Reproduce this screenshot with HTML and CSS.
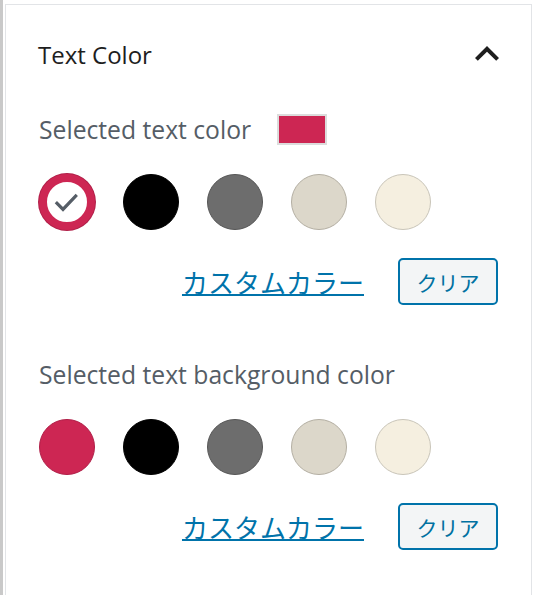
FILE: index.html
```html
<!DOCTYPE html>
<html lang="ja">
  <head>
    <meta charset="UTF-8" />
    <meta name="viewport" content="width=device-width, initial-scale=1.0" />
    <title>Text Color</title>
    <link rel="stylesheet" href="styles.css">
  </head>
  <body>
    <div class="edge"></div>
    <div class="panel">
      <div class="panel-header">
        <h2>Text Color</h2>
        <svg class="chevron" width="48" height="48" viewBox="0 0 24 24">
          <path d="M12 8l-6 6 1.41 1.41L12 10.83l4.59 4.58L18 14z" fill="#1e1e1e" />
        </svg>
      </div>

      <div class="setting">
        <div class="label-row">
          <span class="label">Selected text color</span>
          <span class="current"></span>
        </div>
        <div class="swatches">
          <button class="swatch red selected">
            <svg width="32" height="32" viewBox="0 0 24 24">
              <path d="M9 18.6L3.5 13l1-1L9 16.4l9.5-9.9 1 1z" fill="#555d66" stroke="#555d66" stroke-width="1" />
            </svg>
          </button>
          <button class="swatch black"></button>
          <button class="swatch gray"></button>
          <button class="swatch beige"></button>
          <button class="swatch cream"></button>
        </div>
        <div class="actions">
          <a href="#" class="custom">カスタムカラー</a>
          <button class="clear">クリア</button>
        </div>
      </div>

      <div class="setting second">
        <div class="label-row">
          <span class="label">Selected text background color</span>
        </div>
        <div class="swatches">
          <button class="swatch red"></button>
          <button class="swatch black"></button>
          <button class="swatch gray"></button>
          <button class="swatch beige"></button>
          <button class="swatch cream"></button>
        </div>
        <div class="actions">
          <a href="#" class="custom">カスタムカラー</a>
          <button class="clear">クリア</button>
        </div>
      </div>
    </div>
  </body>
</html>
```

FILE: styles.css
```css
* {
  margin: 0;
  padding: 0;
  box-sizing: border-box;
}
body {
  height: 595px;
  overflow: hidden;
  background-color: white;
  display: flex;
  font-family: "Open Sans", "Noto Sans", sans-serif;
}
.edge {
  width: 3px;
  background-color: #c9c9c9;
  flex-shrink: 0;
}
.panel {
  margin-top: 4px;
  margin-left: 2px;
  width: 527px;
  border-left: 1px solid #e2e4e7;
  border-top: 1px solid #e2e4e7;
  border-right: 1px solid #e2e4e7;
}
.panel-header {
  height: 98px;
  display: flex;
  justify-content: space-between;
  align-items: center;
  padding: 0 20px 0 32px;
}
.panel-header h2 {
  font-size: 24px;
  font-weight: 500;
  color: #1e1e1e;
}
.setting {
  padding: 11px 33px 0 33px;
}
.setting.second {
  padding-top: 54px;
}
.label-row {
  display: flex;
  align-items: center;
  gap: 26px;
  height: 31px;
}
.label {
  font-size: 24.7px;
  color: #555d66;
}
.current {
  width: 50px;
  height: 31px;
  background-color: #cd2653;
  border: 2px solid #dcdcdc;
}
.swatches {
  display: flex;
  gap: 28px;
  margin-top: 29px;
}
.swatch {
  width: 56px;
  height: 56px;
  border-radius: 50%;
  border: 1px solid;
  display: flex;
  justify-content: center;
  align-items: center;
}
.red {
  background-color: #cd2653;
  border-color: #b01f48;
}
.red.selected {
  background-color: white;
  border: 8px solid #cd2653;
  box-shadow: 0 0 0 1px #b01f48;
}
.black {
  background-color: #000000;
  border-color: #000000;
}
.gray {
  background-color: #6d6d6d;
  border-color: #565656;
}
.beige {
  background-color: #dcd7ca;
  border-color: #b4afa3;
}
.cream {
  background-color: #f5efe0;
  border-color: #c9c5b9;
}
.actions {
  display: flex;
  justify-content: flex-end;
  align-items: center;
  gap: 34px;
  margin-top: 28px;
}
.custom {
  font-family: "Noto Sans CJK JP", sans-serif;
  font-size: 26px;
  line-height: 30px;
  color: #0073aa;
  text-decoration: underline;
  text-decoration-thickness: 2px;
}
.clear {
  width: 100px;
  height: 47px;
  border: 2px solid #0073aa;
  border-radius: 5px;
  background-color: #f3f5f6;
  color: #0071a1;
  font-family: "Noto Sans CJK JP", sans-serif;
  font-size: 21px;
}
```
